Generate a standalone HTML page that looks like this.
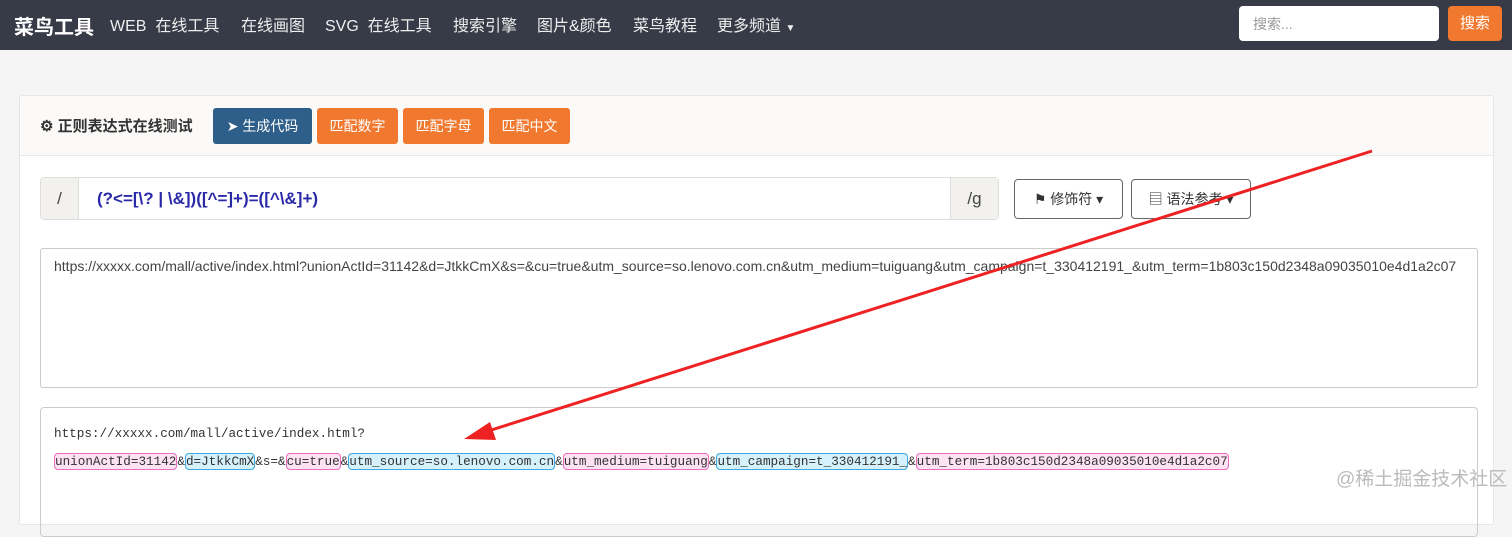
<!DOCTYPE html>
<html><head><meta charset="utf-8"><style>
*{box-sizing:border-box;margin:0;padding:0}
body{width:1512px;height:504px;overflow:hidden;background:#f5f5f5;font-family:"Liberation Sans","Noto Sans CJK SC",sans-serif;position:relative}
.nav{height:50px;background:#373a47;position:relative;color:#fff}
.brand{position:absolute;left:14px;top:11px;font-size:20px;font-weight:bold}
.nav .it{position:absolute;top:12px;font-size:16px;color:#eee;white-space:nowrap}
.sin{position:absolute;left:1239px;top:6px;width:200px;height:35px;background:#fff;border-radius:4px;color:#999;font-size:14px;padding:8px 14px}
.sbtn{position:absolute;left:1448px;top:6px;width:54px;height:35px;background:#f0782f;border-radius:4px;color:#fff;font-size:15px;text-align:center;line-height:35px}
.card{position:absolute;left:19px;top:95px;width:1475px;height:430px;background:#fff;border:1px solid #e6e6e6;border-radius:3px}
.head{height:60px;background:#fbfaf8;border-bottom:1px solid #e8e8e8;position:relative}
.title{position:absolute;left:20px;top:19px;font-size:15px;font-weight:bold;color:#333}
.b{position:absolute;top:12px;height:36px;border-radius:3px;color:#fff;font-size:14px;line-height:36px;text-align:center}
.grp{position:absolute;left:20px;top:81px;width:959px;height:43px;border:1px solid #ddd;border-radius:4px;background:#fff}
.ad{position:absolute;top:0;height:41px;background:#f2f1ee;font-size:17px;color:#444;line-height:41px;text-align:center}
.re{position:absolute;left:56px;top:11px;font-size:17px;font-weight:bold;color:#2a2aa8}
.dd{position:absolute;top:83px;height:40px;border:1px solid #666;border-radius:4px;font-size:14px;color:#333;line-height:38px;text-align:center}
.ta{position:absolute;left:20px;top:152px;width:1438px;height:140px;border:1px solid #ccc;border-radius:3px;padding:9px 13px;font-size:14px;color:#444;white-space:nowrap}
.res{position:absolute;left:20px;top:311px;width:1438px;height:130px;border:1px solid #ccc;border-radius:4px;padding:12px 13px;font-family:"Liberation Mono",monospace;font-size:12.65px;color:#333;white-space:nowrap;line-height:28px}
.p{background:#fde2f3;border:1px solid #e76fc0;border-radius:4px}
.c{background:#d5f1fb;border:1px solid #3fa9e0;border-radius:4px}
</style></head><body>
<div class="nav"><div class="brand">菜鸟工具</div>
<span class="it" style="left:110px">WEB&nbsp; 在线工具</span><span class="it" style="left:241px">在线画图</span><span class="it" style="left:325px">SVG&nbsp; 在线工具</span><span class="it" style="left:453px">搜索引擎</span><span class="it" style="left:537px">图片&amp;颜色</span><span class="it" style="left:633px">菜鸟教程</span><span class="it" style="left:717px">更多频道 <small style="font-size:10px">▼</small></span>
<div class="sin">搜索...</div><div class="sbtn">搜索</div></div>
<div class="card">
<div class="head"><div class="title">⚙ 正则表达式在线测试</div>
<div class="b" style="left:193px;width:99px;background:#2e5e8a">➤ 生成代码</div>
<div class="b" style="left:297px;width:81px;background:#f0782f">匹配数字</div>
<div class="b" style="left:383px;width:81px;background:#f0782f">匹配字母</div>
<div class="b" style="left:469px;width:81px;background:#f0782f">匹配中文</div></div>
<div class="grp"><div class="ad" style="left:0;width:38px;border-radius:4px 0 0 4px;border-right:1px solid #ddd">/</div>
<div class="re">(?&lt;=[\? | \&amp;])([^=]+)=([^\&amp;]+)</div>
<div class="ad" style="right:0;width:48px;border-left:1px solid #ddd">/g</div></div>
<div class="dd" style="left:994px;width:109px">⚑ 修饰符 ▾</div>
<div class="dd" style="left:1111px;width:120px">▤ 语法参考 ▾</div>
<div class="ta">https://xxxxx.com/mall/active/index.html?unionActId=31142&amp;d=JtkkCmX&amp;s=&amp;cu=true&amp;utm_source=so.lenovo.com.cn&amp;utm_medium=tuiguang&amp;utm_campaign=t_330412191_&amp;utm_term=1b803c150d2348a09035010e4d1a2c07</div>
<div class="res">https://xxxxx.com/mall/active/index.html?<br><span class="p">unionActId=31142</span>&amp;<span class="c">d=JtkkCmX</span>&amp;s=&amp;<span class="p">cu=true</span>&amp;<span class="c">utm_source=so.lenovo.com.cn</span>&amp;<span class="p">utm_medium=tuiguang</span>&amp;<span class="c">utm_campaign=t_330412191_</span>&amp;<span class="p">utm_term=1b803c150d2348a09035010e4d1a2c07</span></div>
</div>
<div style="position:absolute;left:1336px;top:464px;font-size:19px;color:#bbb;white-space:nowrap">@稀土掘金技术社区</div>
<svg style="position:absolute;left:0;top:0" width="1512" height="504"><line x1="1372" y1="151" x2="485" y2="432" stroke="#ee2222" stroke-width="3"/><polygon points="464,439 490,422 496,440" fill="#ee2222"/></svg>
</body></html>
